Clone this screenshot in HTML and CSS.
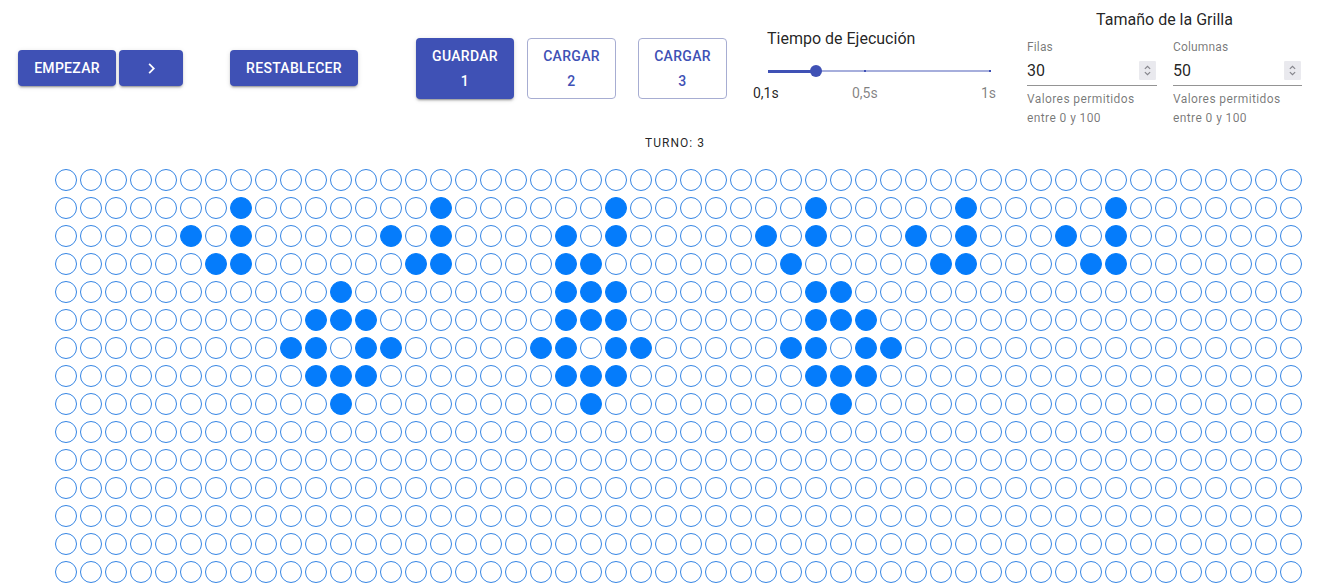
FILE: index.html
```html
<!DOCTYPE html>
<html lang="es">
<head>
<meta charset="utf-8">
<title>Juego de la Vida</title>
<link rel="stylesheet" href="styles.css">
</head>
<body>
<header class="top">
  <div class="run-group">
    <button class="btn btn-start">EMPEZAR</button>
    <button class="btn btn-step" aria-label="Siguiente">
      <svg width="21" height="21" viewBox="0 0 24 24"><path d="M10 6L8.59 7.41 13.17 12l-4.58 4.59L10 18l6-6z" fill="#fff"/></svg>
    </button>
  </div>
  <button class="btn btn-reset">RESTABLECER</button>
  <div class="slots">
    <button class="btn slot slot-save">GUARDAR<br>1</button>
    <button class="slot slot-load slot-2">CARGAR<br>2</button>
    <button class="slot slot-load slot-3">CARGAR<br>3</button>
  </div>
  <div class="speed">
    <div class="speed-title">Tiempo de Ejecución</div>
    <div class="slider">
      <div class="track"></div>
      <div class="track-active"></div>
      <span class="tick tick-mid"></span>
      <span class="tick tick-end"></span>
      <span class="thumb"></span>
      <span class="mark mark-min">0,1s</span>
      <span class="mark mark-mid">0,5s</span>
      <span class="mark mark-max">1s</span>
    </div>
  </div>
  <div class="size">
    <div class="size-title">Tamaño de la Grilla</div>
    <div class="fields">
      <div class="field">
        <label class="field-label">Filas</label>
        <div class="field-input">
          <input type="text" value="30">
          <svg class="spin" width="17" height="19" viewBox="0 0 16 18"><rect width="16" height="18" rx="1" fill="#e9e9ee"/><path d="M5.5 7.5L8 5l2.5 2.5M5.5 10.5L8 13l2.5-2.5" fill="none" stroke="#85858c" stroke-width="1.1"/></svg>
        </div>
        <div class="field-help">Valores permitidos<br>entre 0 y 100</div>
      </div>
      <div class="field">
        <label class="field-label">Columnas</label>
        <div class="field-input">
          <input type="text" value="50">
          <svg class="spin" width="17" height="19" viewBox="0 0 16 18"><rect width="16" height="18" rx="1" fill="#e9e9ee"/><path d="M5.5 7.5L8 5l2.5 2.5M5.5 10.5L8 13l2.5-2.5" fill="none" stroke="#85858c" stroke-width="1.1"/></svg>
        </div>
        <div class="field-help">Valores permitidos<br>entre 0 y 100</div>
      </div>
    </div>
  </div>
</header>
<div class="turno">TURNO: 3</div>
<main class="board" id="board"></main>
<script src="script.js"></script>
</body>
</html>
```
FILE: styles.css
```css
* { box-sizing: border-box; }
body {
  margin: 0;
  font-family: Roboto, "Liberation Sans", sans-serif;
  color: rgba(0,0,0,.87);
  background: #fff;
  overflow: hidden;
}
.top {
  display: flex;
  align-items: flex-start;
  height: 135px;
  padding-left: 18px;
}
.btn {
  height: 36px;
  padding: 0;
  border: none;
  border-radius: 4px;
  background: #3f51b5;
  color: #fff;
  font-family: Roboto, "Liberation Sans", sans-serif;
  font-weight: 500;
  font-size: 14px;
  letter-spacing: .3px;
  box-shadow: 0 3px 1px -2px rgba(0,0,0,.2), 0 2px 2px 0 rgba(0,0,0,.14), 0 1px 5px 0 rgba(0,0,0,.12);
  display: flex;
  align-items: center;
  justify-content: center;
}
.run-group {
  margin-top: 50px;
  display: flex;
  gap: 3px;
}
.btn-start { width: 98px; }
.btn-step { width: 64px; }
.btn-reset {
  margin-top: 50px;
  margin-left: 47px;
  width: 128px;
}
.slots {
  margin-top: 38px;
  margin-left: 58px;
  display: flex;
}
.slot {
  height: 61px;
  line-height: 25px;
  font-family: Roboto, "Liberation Sans", sans-serif;
  font-weight: 500;
  font-size: 14px;
  letter-spacing: .3px;
  border-radius: 4px;
  padding: 0;
  flex-direction: column;
}
.slot-save { width: 98px; height: 61px; }
.slot-load {
  width: 89px;
  background: #fff;
  color: #3f51b5;
  border: 1px solid #a7add2;
}
.slot-2 { margin-left: 13px; }
.slot-3 { margin-left: 22px; }
.speed {
  margin-left: 26px;
  width: 244px;
  padding-top: 29px;
}
.speed-title {
  font-size: 16px;
  line-height: 20px;
  padding-left: 14px;
  color: rgba(0,0,0,.87);
}
.slider {
  position: relative;
  height: 50px;
  margin-top: 2px;
}
.track {
  position: absolute;
  left: 15px;
  top: 19px;
  width: 222px;
  height: 2px;
  background: #a6aedc;
}
.track-active {
  position: absolute;
  left: 15px;
  top: 18.5px;
  width: 48px;
  height: 3px;
  background: #3f51b5;
}
.tick {
  position: absolute;
  top: 19px;
  width: 2px;
  height: 2px;
  background: #3f51b5;
}
.tick-mid { left: 111px; }
.tick-end { left: 236px; }
.thumb {
  position: absolute;
  left: 57px;
  top: 14px;
  width: 12px;
  height: 12px;
  border-radius: 50%;
  background: #3f51b5;
}
.mark {
  position: absolute;
  top: 34px;
  font-size: 14px;
  line-height: 16px;
  color: rgba(0,0,0,.5);
}
.mark-min { left: 0; color: rgba(0,0,0,.87); }
.mark-mid { left: 99px; }
.mark-max { left: 228px; }
.size {
  margin-left: 30px;
  width: 275px;
  padding-top: 10px;
}
.size-title {
  text-align: center;
  font-size: 16px;
  line-height: 20px;
  color: rgba(0,0,0,.87);
}
.fields {
  display: flex;
  gap: 16px;
  margin-top: 9px;
}
.field { width: 130px; }
.field + .field { width: 129px; }
.field-label {
  display: block;
  font-size: 12px;
  line-height: 16px;
  letter-spacing: .15px;
  color: rgba(0,0,0,.54);
}
.field-input {
  display: flex;
  align-items: center;
  height: 28px;
  border-bottom: 1px solid rgba(0,0,0,.42);
  margin-top: 3px;
  padding-bottom: 3px;
}
.field-input input {
  flex: 1;
  min-width: 0;
  border: none;
  outline: none;
  padding: 0;
  background: transparent;
  font-family: Roboto, "Liberation Sans", sans-serif;
  font-size: 16px;
  color: rgba(0,0,0,.87);
}
.spin { flex: none; margin-right: 1px; }
.field-help {
  margin-top: 4px;
  font-size: 12px;
  line-height: 19px;
  letter-spacing: .4px;
  color: rgba(0,0,0,.54);
}
.turno {
  text-align: center;
  font-size: 12px;
  line-height: 16px;
  letter-spacing: 1px;
  padding-left: 6px;
  color: rgba(0,0,0,.87);
}
.board {
  display: grid;
  grid-template-columns: repeat(50, 22px);
  grid-auto-rows: 22px;
  column-gap: 3px;
  row-gap: 6px;
  padding: 18px 0 0 55px;
}
.cell {
  width: 22px;
  height: 22px;
  border-radius: 50%;
  border: 1.5px solid #3585e4;
  background: #fff;
}
.cell.on {
  background: #057cfb;
  border-color: #057cfb;
}
```
FILE: script.js
```js
(function () {
  var live = {
    1: [7, 15, 22, 30, 36, 42],
    2: [5, 7, 13, 15, 20, 22, 28, 30, 34, 36, 40, 42],
    3: [6, 7, 14, 15, 20, 21, 29, 35, 36, 41, 42],
    4: [11, 20, 21, 22, 30, 31],
    5: [10, 11, 12, 20, 21, 22, 30, 31, 32],
    6: [9, 10, 12, 13, 19, 20, 22, 23, 29, 30, 32, 33],
    7: [10, 11, 12, 20, 21, 22, 30, 31, 32],
    8: [11, 21, 31]
  };
  var board = document.getElementById('board');
  var frag = document.createDocumentFragment();
  for (var r = 0; r < 30; r++) {
    var row = live[r] || [];
    for (var c = 0; c < 50; c++) {
      var d = document.createElement('div');
      d.className = row.indexOf(c) >= 0 ? 'cell on' : 'cell';
      frag.appendChild(d);
    }
  }
  board.appendChild(frag);
})();
```
